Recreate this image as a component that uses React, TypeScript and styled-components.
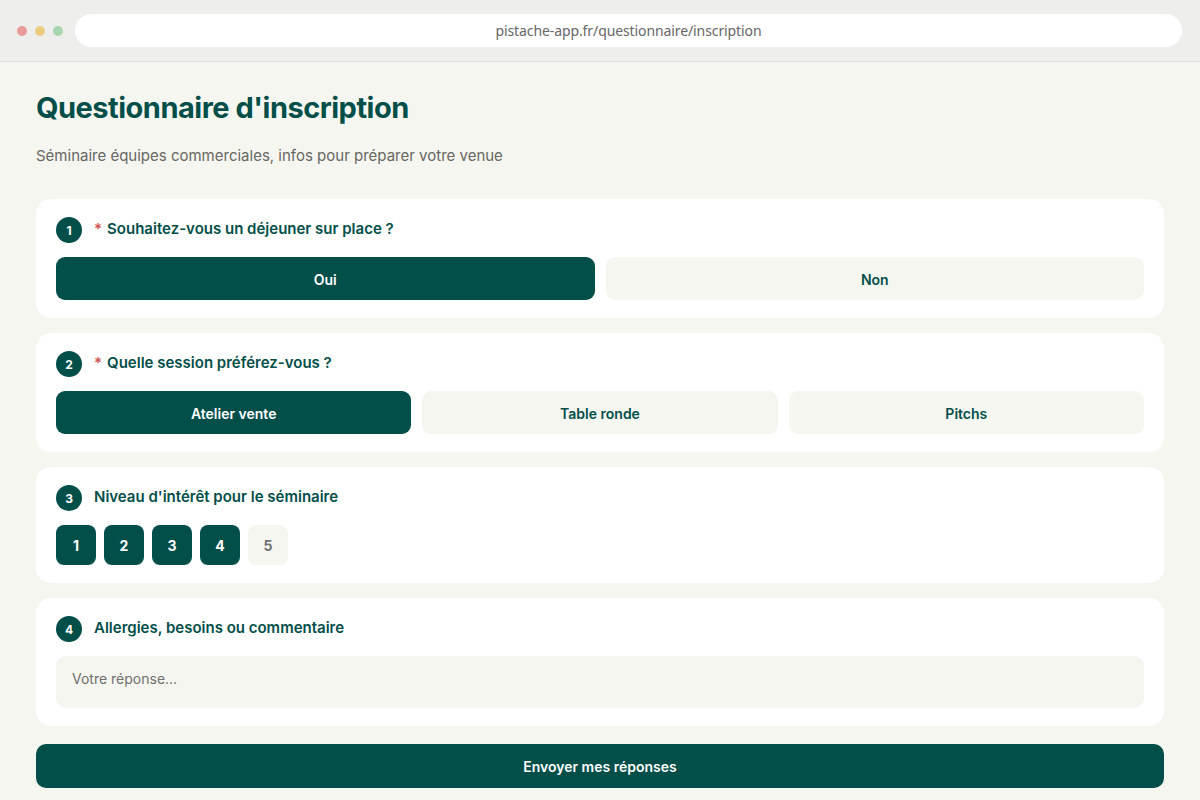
import React, { useState } from 'react';
import styled, { createGlobalStyle } from 'styled-components';

const GlobalStyle = createGlobalStyle`
    * { box-sizing: border-box; }
    body {
        margin: 0;
        font-family: Inter, "Noto Sans", "Liberation Sans", sans-serif;
        background: #f6f6f2;
    }
`;

const green = '#024e49';
const soft = '#f6f6f1';

const Window = styled.div`
    width: 1200px;
    height: 800px;
    display: flex;
    flex-direction: column;
    background: ${soft};
    overflow: hidden;
`;

const TopBar = styled.div`
    height: 62px;
    display: flex;
    align-items: center;
    padding: 0 18px 0 17px;
    background: #eeefec;
    border-bottom: 1px solid #e2e3df;
    flex-shrink: 0;
`;

const Dots = styled.div`
    display: flex;
    gap: 8px;
    margin-right: 12px;
`;

const Dot = styled.span<{ $color: string }>`
    width: 10px;
    height: 10px;
    border-radius: 50%;
    background: ${(p) => p.$color};
`;

const UrlBar = styled.div`
    flex: 1;
    height: 33px;
    border-radius: 17px;
    background: #ffffff;
    display: flex;
    align-items: center;
    justify-content: center;
    font-size: 14px;
    color: #666;
    font-family: "Noto Sans", Inter, sans-serif;
    letter-spacing: -0.1px;
`;

const Page = styled.main`
    padding: 28px 36px 0;
    display: flex;
    flex-direction: column;
`;

const Title = styled.h1`
    margin: 0;
    font-size: 29px;
    line-height: 36px;
    font-weight: 700;
    color: ${green};
    letter-spacing: -0.5px;
`;

const Subtitle = styled.p`
    margin: 19px 0 32px;
    font-size: 15px;
    line-height: 22px;
    color: #666662;
`;

const Cards = styled.div`
    display: flex;
    flex-direction: column;
    gap: 15px;
`;

const Card = styled.section`
    background: #fff;
    border-radius: 15px;
    padding: 18px 20px;
    display: flex;
    flex-direction: column;
    gap: 14px;
`;

const QuestionHead = styled.div`
    display: flex;
    align-items: center;
    gap: 12px;
    height: 26px;
`;

const Badge = styled.span`
    width: 26px;
    height: 26px;
    border-radius: 50%;
    background: ${green};
    color: #fff;
    font-size: 12px;
    font-weight: 700;
    display: flex;
    align-items: center;
    justify-content: center;
    flex-shrink: 0;
`;

const Label = styled.span`
    font-size: 15px;
    line-height: 20px;
    padding-bottom: 3px;
    font-weight: 600;
    color: ${green};
`;

const Star = styled.span`
    color: #d2544e;
    margin-right: 5px;
`;

const Choices = styled.div<{ $cols: number }>`
    display: grid;
    grid-template-columns: repeat(${(p) => p.$cols}, 1fr);
    gap: 11px;
`;

const Choice = styled.button<{ $active: boolean }>`
    height: 43px;
    border: none;
    border-radius: 9px;
    font-family: inherit;
    font-size: 14px;
    font-weight: 600;
    cursor: pointer;
    padding-top: 2px;
    background: ${(p) => (p.$active ? green : soft)};
    color: ${(p) => (p.$active ? '#fff' : green)};
`;

const Scale = styled.div`
    display: flex;
    gap: 8px;
`;

const ScaleItem = styled.button<{ $active: boolean }>`
    width: 40px;
    height: 40px;
    border: none;
    border-radius: 8px;
    font-family: inherit;
    font-size: 14px;
    font-weight: 700;
    cursor: pointer;
    background: ${(p) => (p.$active ? green : soft)};
    color: ${(p) => (p.$active ? '#fff' : '#707070')};
`;

const Answer = styled.textarea`
    height: 52px;
    border: none;
    border-radius: 10px;
    background: ${soft};
    padding: 14px 16px;
    resize: none;
    font-family: inherit;
    font-size: 14px;
    color: #333;
    outline: none;
    &::placeholder {
        color: #6f6f6b;
    }
`;

const Submit = styled.button`
    margin-top: 18px;
    height: 44px;
    border: none;
    border-radius: 10px;
    background: ${green};
    color: #fff;
    font-family: inherit;
    font-size: 14px;
    font-weight: 600;
    cursor: pointer;
`;

export default function App() {
    const [lunch, setLunch] = useState('Oui');
    const [session, setSession] = useState('Atelier vente');
    const [level, setLevel] = useState(4);

    return (
        <Window>
            <GlobalStyle />
            <TopBar>
                <Dots>
                    <Dot $color="#e99a9a" />
                    <Dot $color="#eacb7f" />
                    <Dot $color="#a8d5ad" />
                </Dots>
                <UrlBar>pistache-app.fr/questionnaire/inscription</UrlBar>
            </TopBar>
            <Page>
                <Title>Questionnaire d'inscription</Title>
                <Subtitle>Séminaire équipes commerciales, infos pour préparer votre venue</Subtitle>
                <Cards>
                    <Card>
                        <QuestionHead>
                            <Badge>1</Badge>
                            <Label>
                                <Star>*</Star>Souhaitez-vous un déjeuner sur place ?
                            </Label>
                        </QuestionHead>
                        <Choices $cols={2}>
                            {['Oui', 'Non'].map((o) => (
                                <Choice key={o} $active={lunch === o} onClick={() => setLunch(o)}>
                                    {o}
                                </Choice>
                            ))}
                        </Choices>
                    </Card>
                    <Card>
                        <QuestionHead>
                            <Badge>2</Badge>
                            <Label>
                                <Star>*</Star>Quelle session préférez-vous ?
                            </Label>
                        </QuestionHead>
                        <Choices $cols={3}>
                            {['Atelier vente', 'Table ronde', 'Pitchs'].map((o) => (
                                <Choice key={o} $active={session === o} onClick={() => setSession(o)}>
                                    {o}
                                </Choice>
                            ))}
                        </Choices>
                    </Card>
                    <Card>
                        <QuestionHead>
                            <Badge>3</Badge>
                            <Label>Niveau d'intérêt pour le séminaire</Label>
                        </QuestionHead>
                        <Scale>
                            {[1, 2, 3, 4, 5].map((n) => (
                                <ScaleItem key={n} $active={n <= level} onClick={() => setLevel(n)}>
                                    {n}
                                </ScaleItem>
                            ))}
                        </Scale>
                    </Card>
                    <Card>
                        <QuestionHead>
                            <Badge>4</Badge>
                            <Label>Allergies, besoins ou commentaire</Label>
                        </QuestionHead>
                        <Answer placeholder="Votre réponse..." />
                    </Card>
                </Cards>
                <Submit>Envoyer mes réponses</Submit>
            </Page>
        </Window>
    );
}
